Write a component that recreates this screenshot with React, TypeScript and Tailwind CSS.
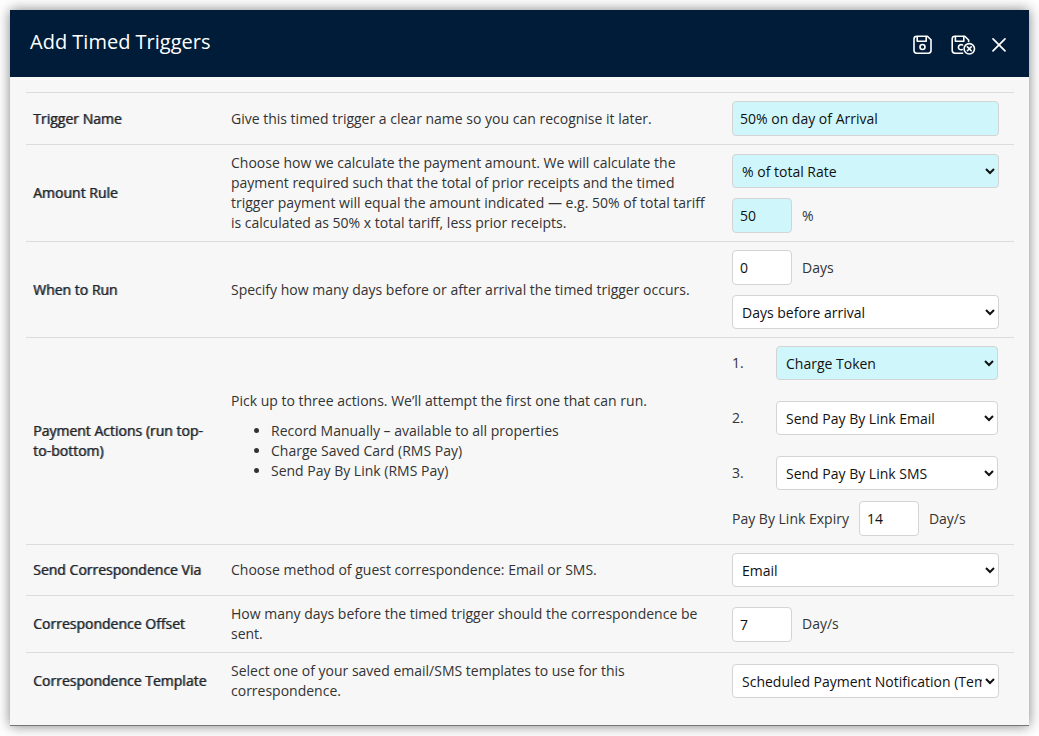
import type { ReactNode } from "react";

const control =
  "block rounded-[4px] border border-[#d4d4d4] text-sm leading-5 text-[#111] outline-none focus:border-sky-500";

function Field({ id, label, value, required, className }: { id: string; label?: string; value: string; required?: boolean; className: string }) {
  return (
    <input
      id={id}
      aria-label={label}
      defaultValue={value}
      required={required}
      className={`${control} h-[35px] px-[7px] ${required ? "bg-[#cff7fb]" : "bg-white"} ${className}`}
    />
  );
}

function Choice({ id, label, options, required }: { id: string; label?: string; options: string[]; required?: boolean }) {
  return (
    <select
      id={id}
      aria-label={label}
      required={required}
      className={`${control} h-[34px] w-full min-w-0 pr-0 pl-[5px] ${required ? "bg-[#cff7fb]" : "bg-white"}`}
    >
      {options.map((option) => (
        <option key={option}>{option}</option>
      ))}
    </select>
  );
}

function Row({ title, htmlFor, description, children }: { title: string; htmlFor: string; description: ReactNode; children: ReactNode }) {
  return (
    <div className="grid grid-cols-[198px_1fr_290px] items-center border-t border-[#dcdcdc] py-2">
      <label htmlFor={htmlFor} className="pr-3 pl-[7px] text-[#212529] [text-shadow:1px_0_0_#21252999]">
        {title}
      </label>
      <div className="pr-2 pl-[7px]">{description}</div>
      <div className="flex flex-col gap-2.5 pr-[15px] pl-2">{children}</div>
    </div>
  );
}

function SaveIcon() {
  return (
    <svg width="20" height="20" viewBox="0 0 20 20" fill="none" stroke="currentColor" strokeWidth="1.6" strokeLinejoin="round" aria-hidden="true">
      <path d="M4 1.2H14.4L18 4.8V15.6Q18 18.2 15.4 18.2H3.6Q1 18.2 1 15.6V3.8Q1 1.2 4 1.2Z" />
      <path d="M4.2 1.5V6.3H13.2V1.5" />
      <circle cx="9.5" cy="12" r="2.5" />
    </svg>
  );
}

function SaveCloseIcon() {
  return (
    <svg width="25" height="20" viewBox="0 0 25 20" fill="none" stroke="currentColor" strokeWidth="1.6" strokeLinecap="round" strokeLinejoin="round" aria-hidden="true">
      <path d="M11.6 18.2H4Q1.2 18.2 1.2 15.6V3.8Q1.2 1.2 4 1.2H13.8L17.6 5V6.4" />
      <path d="M4.4 1.5V6.3H12.8V1.5" />
      <path d="M11.6 9.9C9.4 9 7.4 10.2 7.4 12.2C7.4 14.2 9.3 15.3 11.2 14.5" />
      <circle cx="18.3" cy="13.8" r="5.2" />
      <path d="M16.4 11.9L20.2 15.7M20.2 11.9L16.4 15.7" />
    </svg>
  );
}

function CloseIcon() {
  return (
    <svg width="16" height="16" viewBox="0 0 16 16" fill="none" stroke="currentColor" strokeWidth="1.7" strokeLinecap="round" aria-hidden="true">
      <path d="M2 1.8L14 13.8M14 1.8L2 13.8" />
    </svg>
  );
}

export default function App() {
  return (
    <div className="bg-white p-2.5 font-['Open_Sans','Noto_Sans',sans-serif] text-sm leading-5 text-[#333]">
      <section aria-labelledby="dialog-title" className="border-b border-[#777] bg-[#f7f7f7] shadow-[0_0_12px_rgba(0,0,0,0.5)]">
        <header className="flex h-[67px] items-center justify-between bg-[#001c38] pr-[22px] pl-5 text-white">
          <h1 id="dialog-title" className="pb-1 text-xl leading-7">
            Add Timed Triggers
          </h1>
          <div className="flex items-center gap-[15px] pt-0.5">
            <button type="button" aria-label="Save" className="mr-[3px]">
              <SaveIcon />
            </button>
            <button type="button" aria-label="Save and close">
              <SaveCloseIcon />
            </button>
            <button type="button" aria-label="Close">
              <CloseIcon />
            </button>
          </div>
        </header>

        <form className="pt-[15px] pr-[15px] pb-4 pl-4">
          <Row title="Trigger Name" htmlFor="name" description="Give this timed trigger a clear name so you can recognise it later.">
            <Field id="name" value="50% on day of Arrival" required className="w-full" />
          </Row>

          <Row
            title="Amount Rule"
            htmlFor="rule"
            description="Choose how we calculate the payment amount. We will calculate the payment required such that the total of prior receipts and the timed trigger payment will equal the amount indicated — e.g. 50% of total tariff is calculated as 50% x total tariff, less prior receipts."
          >
            <div className="pt-px">
              <Choice id="rule" options={["% of total Rate", "Fixed Amount"]} required />
            </div>
            <div className="flex items-center gap-2.5">
              <Field id="percent" value="50" required className="w-[60px]" />
              <label htmlFor="percent">%</label>
            </div>
          </Row>

          <Row title="When to Run" htmlFor="when" description="Specify how many days before or after arrival the timed trigger occurs.">
            <div className="flex items-center gap-2.5">
              <Field id="days" value="0" className="w-[60px]" />
              <label htmlFor="days">Days</label>
            </div>
            <Choice id="when" options={["Days before arrival", "Days after arrival"]} />
          </Row>

          <Row
            title="Payment Actions (run top-to-bottom)"
            htmlFor="action-1"
            description={
              <div className="pb-2.5">
                <p className="mb-2.5">Pick up to three actions. We’ll attempt the first one that can run.</p>
                <ul className="list-disc pl-10">
                  <li>Record Manually – available to all properties</li>
                  <li>Charge Saved Card (RMS Pay)</li>
                  <li>Send Pay By Link (RMS Pay)</li>
                </ul>
              </div>
            }
          >
            <ol className="flex flex-col gap-[21px] pr-px">
              <li className="grid grid-cols-[44px_1fr] items-center">
                <label htmlFor="action-1">1.</label>
                <Choice id="action-1" options={["Charge Token", "Send Pay By Link Email", "Send Pay By Link SMS"]} required />
              </li>
              <li className="grid grid-cols-[44px_1fr] items-center">
                <label htmlFor="action-2">2.</label>
                <Choice id="action-2" options={["Send Pay By Link Email", "Send Pay By Link SMS"]} />
              </li>
              <li className="grid grid-cols-[44px_1fr] items-center">
                <label htmlFor="action-3">3.</label>
                <Choice id="action-3" options={["Send Pay By Link SMS", "Send Pay By Link Email"]} />
              </li>
            </ol>
            <div className="flex items-center gap-2.5 pt-px">
              <label htmlFor="expiry">Pay By Link Expiry</label>
              <Field id="expiry" value="14" className="w-[60px]" />
              <span>Day/s</span>
            </div>
          </Row>

          <Row title="Send Correspondence Via" htmlFor="via" description="Choose method of guest correspondence: Email or SMS.">
            <Choice id="via" options={["Email", "SMS"]} />
          </Row>

          <Row title="Correspondence Offset" htmlFor="offset" description="How many days before the timed trigger should the correspondence be sent.">
            <div className="flex items-center gap-2.5">
              <Field id="offset" value="7" className="w-[60px]" />
              <span>Day/s</span>
            </div>
          </Row>

          <Row title="Correspondence Template" htmlFor="template" description="Select one of your saved email/SMS templates to use for this correspondence.">
            <Choice id="template" options={["Scheduled Payment Notification (Template)"]} />
          </Row>
        </form>
      </section>
    </div>
  );
}
